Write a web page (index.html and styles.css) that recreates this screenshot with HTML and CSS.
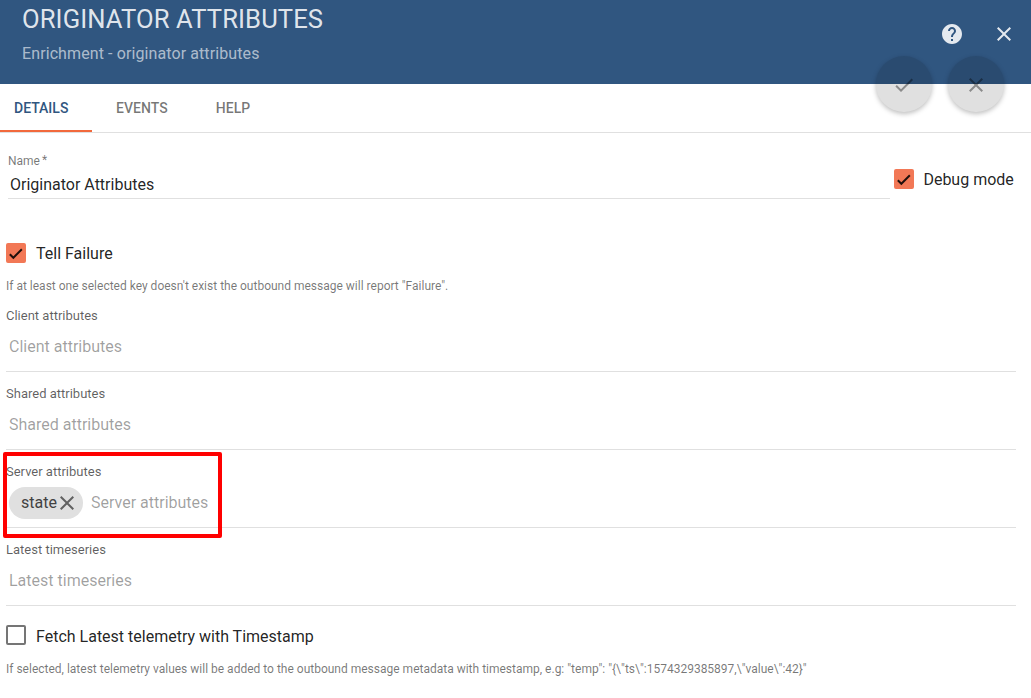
FILE: index.html
```html
<!DOCTYPE html>
<html lang="en">
<head>
<meta charset="utf-8">
<title>Originator Attributes</title>
<link rel="stylesheet" href="styles.css">
</head>
<body>
<div class="panel">
  <header class="toolbar">
    <div class="heading">
      <h1 class="title">Originator Attributes</h1>
      <p class="subtitle">Enrichment - originator attributes</p>
    </div>
    <div class="actions">
      <svg class="icon" viewBox="0 0 24 24"><path d="M12 2C6.48 2 2 6.48 2 12s4.480 10 10 10 10-4.480 10-10S17.520 2 12 2zm1 17h-2v-2h2v2zm2.070-7.750l-.9.920C13.450 12.900 13 13.500 13 15h-2v-.5c0-1.100.45-2.100 1.170-2.830l1.240-1.260c.37-.36.59-.86.59-1.410 0-1.100-.9-2-2-2s-2 .9-2 2H8c0-2.210 1.790-4 4-4s4 1.790 4 4c0 .88-.36 1.680-.93 2.250z"/></svg>
      <svg class="icon" viewBox="0 0 24 24"><path d="M19 6.410L17.590 5 12 10.590 6.410 5 5 6.410 10.590 12 5 17.590 6.410 19 12 13.410 17.590 19 19 17.590 13.410 12z"/></svg>
    </div>
    <div class="fabs">
      <span class="fab"><svg class="icon" viewBox="0 0 24 24"><path d="M9 16.170L4.830 12l-1.420 1.410L9 19 21 7l-1.410-1.410z"/></svg></span>
      <span class="fab"><svg class="icon" viewBox="0 0 24 24"><path d="M19 6.410L17.590 5 12 10.590 6.410 5 5 6.410 10.590 12 5 17.590 6.410 19 12 13.410 17.590 19 19 17.590 13.410 12z"/></svg></span>
    </div>
  </header>
  <nav class="tabs">
    <span class="tab active">DETAILS</span>
    <span class="tab">EVENTS</span>
    <span class="tab">HELP</span>
  </nav>
  <main class="content">
    <div class="name-row">
      <div class="field">
        <div class="field-label">Name<span class="star">*</span></div>
        <div class="field-value">Originator Attributes</div>
      </div>
      <div class="check debug"><span class="box checked"></span><span>Debug mode</span></div>
    </div>
    <div class="check tell"><span class="box checked"></span><span>Tell Failure</span></div>
    <p class="hint">If at least one selected key doesn't exist the outbound message will report "Failure".</p>
    <section class="group">
      <div class="group-label">Client attributes</div>
      <div class="chips"><span class="placeholder">Client attributes</span></div>
    </section>
    <section class="group">
      <div class="group-label">Shared attributes</div>
      <div class="chips"><span class="placeholder">Shared attributes</span></div>
    </section>
    <section class="group marked">
      <div class="group-label">Server attributes</div>
      <div class="chips">
        <span class="chip">state<svg class="icon" viewBox="0 0 24 24"><path d="M19 6.410L17.590 5 12 10.590 6.410 5 5 6.410 10.590 12 5 17.590 6.410 19 12 13.410 17.590 19 19 17.590 13.410 12z"/></svg></span>
        <span class="placeholder">Server attributes</span>
      </div>
    </section>
    <section class="group">
      <div class="group-label">Latest timeseries</div>
      <div class="chips"><span class="placeholder">Latest timeseries</span></div>
    </section>
    <div class="check fetch"><span class="box"></span><span class="fetch-label">Fetch Latest telemetry with Timestamp</span></div>
    <p class="hint fetch-hint">If selected, latest telemetry values will be added to the outbound message metadata with timestamp, e.g: "temp": "{\"ts\":1574329385897,\"value\":42}"</p>
  </main>
</div>
</body>
</html>
```
FILE: styles.css
```css
*, *::after { box-sizing: border-box; }
body { margin: 0; background: #fff; font-family: Roboto, sans-serif; font-size: 16px; color: rgba(0,0,0,.87); overflow: hidden; }
h1, p { margin: 0; }
.icon { display: block; width: 24px; height: 24px; fill: currentColor; flex: none; }
.toolbar { position: relative; display: flex; justify-content: space-between; height: 84px; padding: 4px 15px 0 22px; background: #305680; color: rgba(255,255,255,.87); }
.title { font-size: 25.6px; font-weight: 400; line-height: 30px; letter-spacing: .1px; text-transform: uppercase; }
.subtitle { margin-top: 10px; line-height: 20px; letter-spacing: .1px; opacity: .7; }
.actions { display: flex; gap: 28px; padding-top: 18px; }
.fabs { position: absolute; top: 56px; right: 27px; display: flex; gap: 16px; }
.fab { display: grid; place-items: center; width: 56px; height: 56px; padding-top: 2px; border-radius: 50%; background: rgba(0,0,0,.12); color: rgba(0,0,0,.38); box-shadow: 0 2px 5px 0 rgba(0,0,0,.26); }
.tabs { display: flex; height: 49px; border-bottom: 1px solid #e0e0e0; font-size: 14px; font-weight: 500; line-height: 20px; letter-spacing: .05px; color: rgba(0,0,0,.54); }
.tab { padding: 14px 24px; }
.tab.active { width: 92px; padding-left: 14px; padding-right: 0; color: #305680; border-bottom: 2px solid #f2693c; letter-spacing: 0; }
.content { padding: 20px 15px 0 6px; }
.name-row { display: flex; height: 46px; }
.field { width: 882px; margin-left: 2px; border-bottom: 1px solid #e0e0e0; }
.field-label { font-size: 12px; line-height: 16px; color: rgba(0,0,0,.54); }
.star { margin-left: 2px; vertical-align: 1px; line-height: 1; }
.field-value { padding-left: 2px; line-height: 20px; margin-top: 6px; }
.check { display: flex; align-items: center; gap: 10px; height: 20px; white-space: nowrap; }
.debug { gap: 9.4px; margin: 16px 0 0 4px; }
.box { position: relative; flex: none; width: 20px; height: 20px; border: 2px solid #757575; border-radius: 2px; }
.box.checked { border-color: #f27856; background: #f27856; }
.box.checked::after { content: ""; position: absolute; left: 5px; top: .5px; width: 6px; height: 12.5px; border: solid rgba(0,0,0,.87); border-width: 0 2px 2px 0; transform: rotate(45deg); }
.tell { margin-top: 44px; }
.hint { margin-top: 15px; font-size: 12px; line-height: 16px; color: rgba(0,0,0,.54); white-space: nowrap; }
.group { position: relative; height: 78px; padding-top: 14px; border-bottom: 1px solid #e0e0e0; }
.group-label { font-size: 13px; line-height: 16px; color: rgba(0,0,0,.63); }
.chips { display: flex; gap: 8px; height: 32px; margin-top: 7px; padding-left: 3px; line-height: 32px; }
.placeholder { color: rgba(0,0,0,.38); }
.chip { display: flex; align-items: center; width: 74px; padding-left: 12px; border-radius: 16px; background: #e0e0e0; color: #424242; }
.chip .icon { margin-left: -2px; color: #616161; }
.marked::after { content: ""; position: absolute; z-index: 1; left: -3px; top: 2px; width: 219px; height: 86px; border: 4px solid #f00; border-radius: 2px; }
.fetch { margin-top: 19px; }
.fetch-label { padding-top: 2px; }
.fetch-hint { margin-top: 16px; }
```
